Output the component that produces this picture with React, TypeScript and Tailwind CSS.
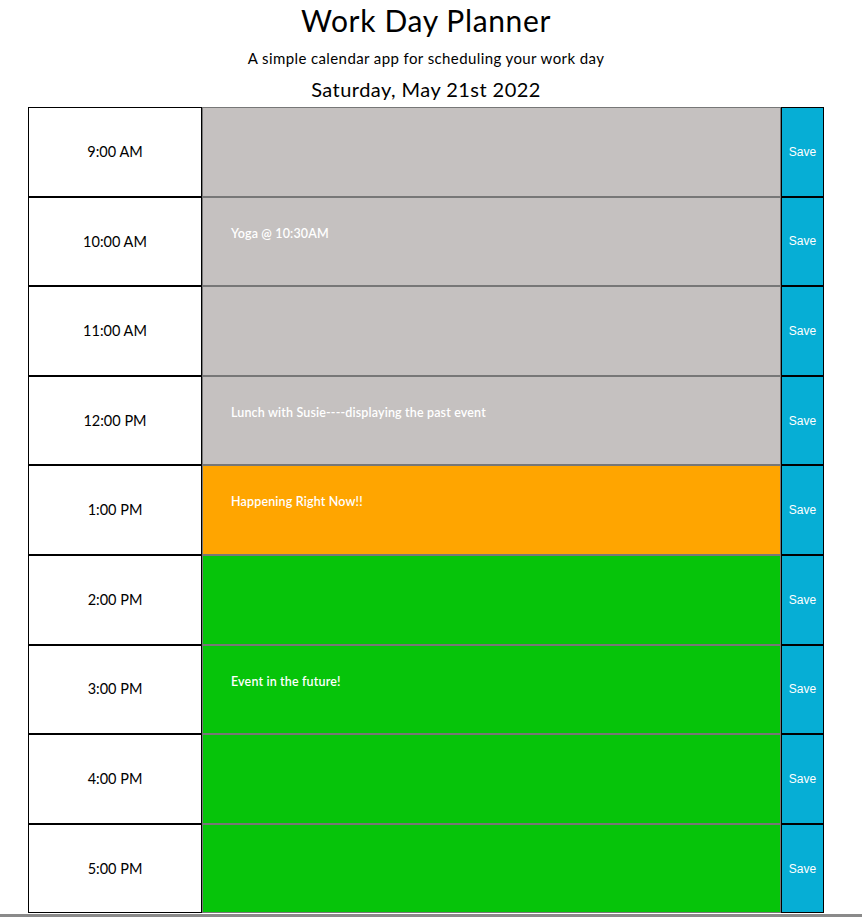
import React from 'react';

type Slot = { label: string; text: string; state: 'past' | 'present' | 'future' };

const slots: Slot[] = [
  { label: '9:00 AM', text: '', state: 'past' },
  { label: '10:00 AM', text: 'Yoga @ 10:30AM', state: 'past' },
  { label: '11:00 AM', text: '', state: 'past' },
  { label: '12:00 PM', text: 'Lunch with Susie----displaying the past event', state: 'past' },
  { label: '1:00 PM', text: 'Happening Right Now!!', state: 'present' },
  { label: '2:00 PM', text: '', state: 'future' },
  { label: '3:00 PM', text: 'Event in the future!', state: 'future' },
  { label: '4:00 PM', text: '', state: 'future' },
  { label: '5:00 PM', text: '', state: 'future' },
];

const stateBg = {
  past: 'bg-[#c5c1c0]',
  present: 'bg-[#ffa500]',
  future: 'bg-[#06c40a]',
};

const font = { fontFamily: 'Lato, "Noto Sans", sans-serif' };

export default function App() {
  return (
    <div className="min-h-[917px] bg-white text-black" style={font}>
      <div className="w-[852px]">
        <header className="text-center">
          <h1 className="pt-[3px] text-[30px] leading-[34px] tracking-[0.65px]">Work Day Planner</h1>
          <p className="mt-[12px] text-[15px] leading-[18px] tracking-[0.4px]">A simple calendar app for scheduling your work day</p>
          <p className="mt-[10px] text-[20px] leading-[24px] tracking-[0.45px]">Saturday, May 21st 2022</p>
        </header>

        <div className="mx-auto mt-[6px] w-[796px]">
          {slots.map((s) => (
            <div key={s.label} className="flex h-[89.6px]">
              <div className="flex w-[174px] items-center justify-center border border-black text-[14.5px]">
                {s.label}
              </div>
              <div className={`flex-1 border border-[#777777] px-[28px] pt-[27px] text-[12.5px] font-semibold tracking-[0.15px] text-white ${stateBg[s.state]}`}>
                {s.text}
              </div>
              <button
                className="flex w-[43px] items-center justify-center border border-black bg-[#06aed5] text-[12px] text-white"
                style={{ fontFamily: '"Liberation Sans", Arial, sans-serif' }}
              >
                Save
              </button>
            </div>
          ))}
        </div>
      </div>
      <div className="mt-[1px] h-[3px] w-full bg-[#8a8a8a]" />
    </div>
  );
}
